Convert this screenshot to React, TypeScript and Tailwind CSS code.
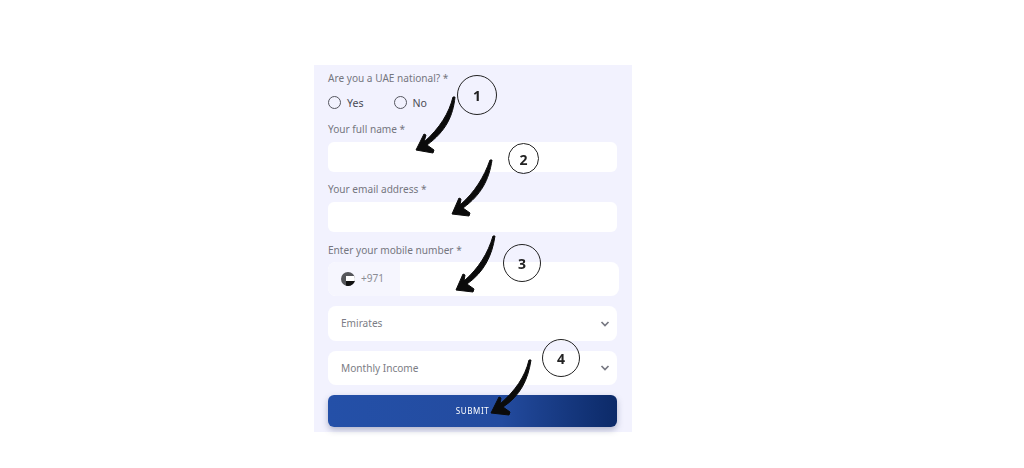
const font = "font-['Noto_Sans','Open_Sans',sans-serif]";

const Field = ({ label, className }: { label: string; className: string }) => (
  <div className="flex flex-col">
    <label className="h-[15px] pt-[1px] text-[10.1px] leading-[15px] text-[#75767f]">{label}</label>
    <div className={`rounded-md bg-white ${className}`} />
  </div>
);

const Select = ({ label, className }: { label: string; className: string }) => (
  <div className={`flex items-center justify-between rounded-lg bg-white pl-[13px] pr-[7px] ${className}`}>
    <span className="pt-[1px] text-[10.1px] text-[#7c7d85]">{label}</span>
    <svg width="10" height="8" viewBox="0 0 10 8" fill="none" stroke="#777882" strokeWidth="1.7">
      <path d="M1.5 2 L5 5.5 L8.5 2" />
    </svg>
  </div>
);

const Radio = ({ label }: { label: string }) => (
  <div className="flex items-center gap-[6px]">
    <span className="h-[13px] w-[13px] rounded-full border border-[#55565f]" />
    <span className="pt-[3px] text-[10.6px] text-[#4b4c55]">{label}</span>
  </div>
);

const Step = ({ n, className }: { n: number; className: string }) => (
  <div className={`absolute flex items-center justify-center rounded-full border-[1.3px] border-[#222] pt-[1px] text-[14px] font-bold text-[#222] ${className}`}>
    {n}
  </div>
);

const arrows = [
  "M455 97 C453 116 446 131 427 145 L434 150 L433 153 L416 150 L424 134 L426 135 L424 142 C440 128 449 113 453 97 Z",
  "M492 160 C489 180 481 195 463 208 L470 213 L469 216 L452 214 L459 198 L461 199 L460 205 C475 192 484 177 490 160 Z",
  "M495 236 C492 256 484 272 467 284 L474 289 L473 292 L456 290 L463 274 L465 275 L464 281 C479 268 488 253 493 236 Z",
  "M531 360 C528 380 520 396 503 407 L510 412 L509 415 L491 413 L499 397 L501 398 L500 404 C515 391 525 377 529 360 Z",
];

export default function App() {
  return (
    <div className={`relative h-[468px] w-[1024px] overflow-hidden bg-white ${font}`}>
      <div className="ml-[314px] pt-[65px]">
        <form className="flex h-[367px] w-[318px] flex-col bg-[#f2f2fe] pl-[14px] pr-[15px] pt-[5px] blur-[0.5px]">
          <label className="h-[15px] pt-[1px] text-[10.1px] leading-[15px] text-[#75767f]">Are you a UAE national? *</label>
          <div className="mt-[8px] flex h-[18px] items-center gap-[30px]">
            <Radio label="Yes" />
            <Radio label="No" />
          </div>
          <div className="mt-[10px]">
            <Field label="Your full name *" className="mt-[6px] h-[30px]" />
          </div>
          <div className="mt-[9px]">
            <Field label="Your email address *" className="mt-[6px] h-[30px]" />
          </div>
          <div className="mt-[10px] flex flex-col">
            <label className="h-[15px] pt-[1px] text-[10.1px] leading-[15px] text-[#75767f]">Enter your mobile number *</label>
            <div className="mr-[-2px] mt-[5px] flex h-[34px] overflow-hidden rounded-lg bg-white">
              <div className="flex w-[72px] items-center gap-[6px] bg-[#f6f6fe] pl-[13px]">
                <span className="relative h-[14px] w-[14px] overflow-hidden rounded-full bg-[#55565a]">
                  <span className="absolute left-[5px] top-[4px] h-[5px] w-[9px] bg-white" />
                  <span className="absolute bottom-0 left-[5px] h-[5px] w-[9px] bg-[#111]" />
                </span>
                <span className="text-[10.1px] text-[#8b8c94]">+971</span>
              </div>
            </div>
          </div>
          <Select label="Emirates" className="mt-[10px] h-[35px]" />
          <Select label="Monthly Income" className="mt-[10px] h-[34px]" />
          <button type="button" className="mt-[10px] h-[32px] rounded-md bg-gradient-to-r from-[#2450a8] via-[#234b9f] via-60% to-[#0c2a68] text-[8px] tracking-[0.08em] text-white shadow-[0_3px_6px_rgba(60,70,110,0.35)]">
            SUBMIT
          </button>
        </form>
      </div>

      <Step n={1} className="left-[457px] top-[75px] h-[40px] w-[40px]" />
      <Step n={2} className="left-[508px] top-[143px] h-[31px] w-[31px]" />
      <Step n={3} className="left-[503px] top-[244px] h-[38px] w-[38px]" />
      <Step n={4} className="left-[542px] top-[339px] h-[38px] w-[38px]" />

      <svg className="absolute inset-0" width="1024" height="468" viewBox="0 0 1024 468">
        {arrows.map((d) => (
          <path key={d} d={d} fill="#0b0b0b" stroke="#0b0b0b" strokeWidth="1" strokeLinejoin="round" />
        ))}
      </svg>
    </div>
  );
}
